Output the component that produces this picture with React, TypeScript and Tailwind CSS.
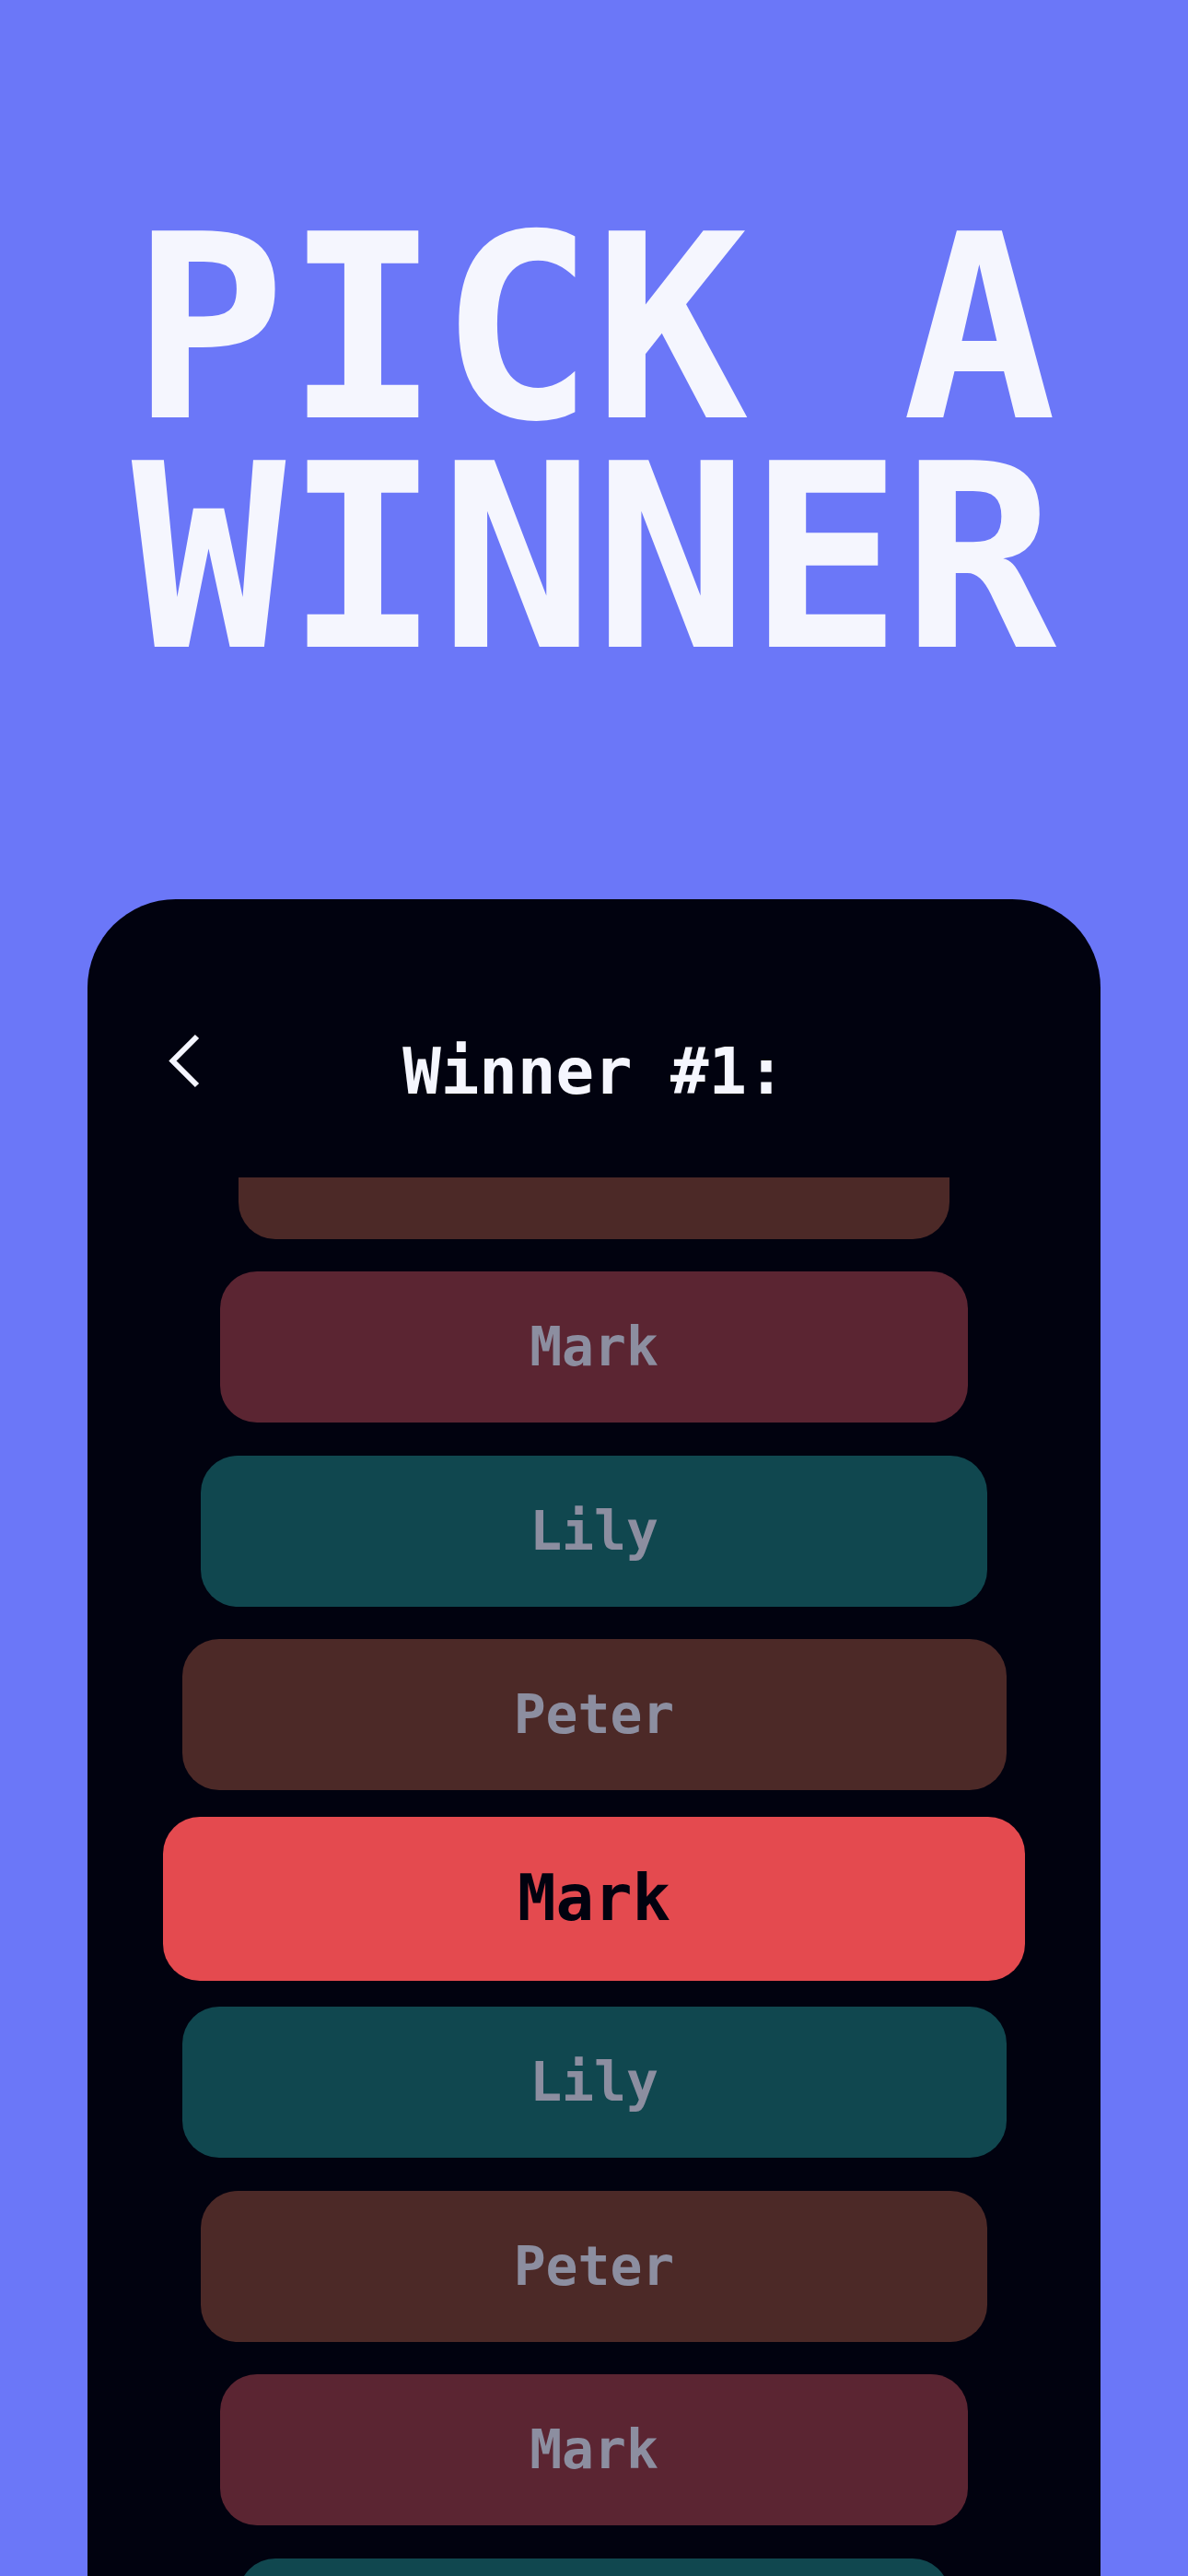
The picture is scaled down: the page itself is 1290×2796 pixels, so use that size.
import { clsx } from 'clsx'

type Entry = {
  name: string
  tone: 'maroon' | 'teal' | 'brown'
  width: string
  selected?: boolean
  hidden?: boolean
}

// wheel order, top to bottom; the picked entry sits in the middle and the rest shrink away from it
const wheel: Entry[] = [
  { name: 'Peter', tone: 'brown', width: 'w-[772px]', hidden: true },
  { name: 'Mark', tone: 'maroon', width: 'w-[812px]' },
  { name: 'Lily', tone: 'teal', width: 'w-[854px]' },
  { name: 'Peter', tone: 'brown', width: 'w-[895px]' },
  { name: 'Mark', tone: 'maroon', width: 'w-[936px]', selected: true },
  { name: 'Lily', tone: 'teal', width: 'w-[895px]' },
  { name: 'Peter', tone: 'brown', width: 'w-[854px]' },
  { name: 'Mark', tone: 'maroon', width: 'w-[812px]' },
  { name: 'Lily', tone: 'teal', width: 'w-[772px]', hidden: true },
]

const toneBg = {
  maroon: 'bg-[#5b2532]',
  teal: 'bg-[#10474f]',
  brown: 'bg-[#4c2927]',
}

function BackChevron() {
  return (
    <svg width="44" height="70" viewBox="0 0 44 70" fill="none" aria-hidden>
      <path
        d="M36 8 L9.5 34.5 L36 61"
        stroke="#f5f6ff"
        strokeWidth="6"
        strokeLinecap="butt"
        strokeLinejoin="miter"
      />
    </svg>
  )
}

function WheelRow({ entry }: { entry: Entry }) {
  return (
    <div className="flex h-[199.5px] w-full shrink-0 items-center justify-center">
      <div
        className={clsx(
          'flex items-center justify-center rounded-[40px] font-bold leading-none',
          entry.width,
          entry.selected
            ? 'h-[178px] bg-[#e44a4f] text-[69px] text-[#01020f]'
            : clsx('h-[164px] text-[58px] text-[#8c8ea0]', toneBg[entry.tone]),
        )}
      >
        {/* entries rolled past the viewport edge keep only their pill */}
        {entry.hidden ? null : entry.name}
      </div>
    </div>
  )
}

export default function App() {
  return (
    <div className="flex h-[2796px] w-full flex-col items-center overflow-hidden bg-[#6b77f8] font-['DejaVu_Sans_Mono','Liberation_Mono',monospace]">
      <h1 className="mt-[233px] text-center text-[278px] font-bold leading-[249px] text-[#f5f6fe]">
        PICK A
        <br />
        WINNER
      </h1>

      <section className="mt-[245px] flex w-[1100px] flex-1 flex-col overflow-hidden rounded-t-[96px] bg-[#01020f] pt-[141px]">
        <header className="grid h-[161px] shrink-0 grid-cols-[1fr_auto_1fr] items-start">
          <button className="justify-self-start pl-[83px]">
            <BackChevron />
          </button>
          <h2 className="mt-[4px] text-[69px] font-bold leading-[84px] text-[#f5f6fe]">Winner #1:</h2>
          <div />
        </header>

        <div className="flex-1 overflow-hidden">
          <div className="-mt-[115px] flex flex-col items-center">
            {wheel.map((entry, i) => (
              <WheelRow key={i} entry={entry} />
            ))}
          </div>
        </div>
      </section>
    </div>
  )
}
